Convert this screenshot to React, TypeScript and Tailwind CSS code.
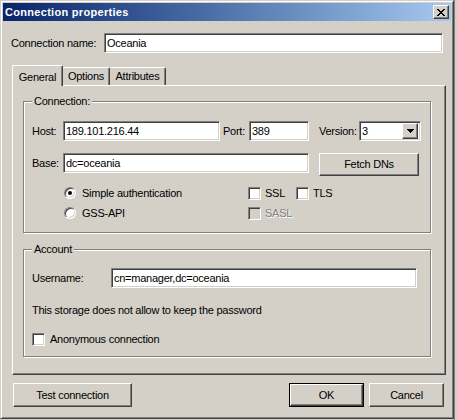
import type { ReactNode } from 'react';

const sunken =
  'border border-t-[#808080] border-l-[#808080] border-r-white border-b-white shadow-[inset_1px_1px_0_#404040,inset_-1px_-1px_0_#d4d0c8]';
const raised =
  'border border-t-white border-l-white border-r-[#404040] border-b-[#404040] shadow-[inset_-1px_-1px_0_#808080]';

function TextBox({ value, className }: { value: string; className: string }) {
  return (
    <div className={`${sunken} flex h-[20px] items-center bg-white pl-[2px] ${className}`}>
      <span>{value}</span>
    </div>
  );
}

function Button({ label, className, isDefault }: { label: string; className: string; isDefault?: boolean }) {
  if (isDefault) {
    return (
      <div className={`border border-black ${className}`}>
        <div className={`${raised} flex h-full w-full items-center justify-center`}>{label}</div>
      </div>
    );
  }
  return <div className={`${raised} flex items-center justify-center ${className}`}>{label}</div>;
}

function Checkbox({ disabled }: { disabled?: boolean }) {
  return <div className={`${sunken} h-[13px] w-[13px] shrink-0 ${disabled ? 'bg-[#d4d0c8]' : 'bg-white'}`} />;
}

function Radio({ checked }: { checked?: boolean }) {
  return (
    <div className="flex h-[12px] w-[12px] shrink-0 items-center justify-center rounded-full border border-t-[#808080] border-l-[#808080] border-r-white border-b-white bg-white shadow-[inset_1px_1px_0_#404040,inset_-1px_-1px_0_#d4d0c8]">
      {checked && <div className="h-[4px] w-[4px] rounded-full bg-black" />}
    </div>
  );
}

function Group({ title, className, children }: { title: string; className: string; children: ReactNode }) {
  return (
    <div
      className={`relative ml-[10px] w-[408px] border border-[#808080] shadow-[1px_1px_0_#fff,inset_1px_1px_0_#fff] ${className}`}
    >
      <span className="absolute -top-[8px] left-[8px] bg-[#d4d0c8] px-[2px] leading-[14px]">{title}</span>
      {children}
    </div>
  );
}

export default function App() {
  return (
    <div className="flex h-[420px] w-[457px] bg-[#d4d0c8] font-['Liberation_Sans',Arial,sans-serif] text-[11px] tracking-[-0.25px] text-black">
      <div className="h-[419px] w-[454px] shrink-0 border border-t-[#d4d0c8] border-l-[#d4d0c8] border-r-[#404040] border-b-[#404040] p-[2px] shadow-[inset_1px_1px_0_#fff,inset_-1px_-1px_0_#808080]">
        {/* title bar */}
        <div className="flex h-[18px] items-center justify-between bg-linear-to-r from-[#0a246a] to-[#a6caf0] pl-[2px] pr-[2px]">
          <span className="text-[11px] font-bold tracking-[0.3px] text-white">Connection properties</span>
          <div className={`${raised} flex h-[14px] w-[16px] items-center justify-center bg-[#d4d0c8]`}>
            <svg width="8" height="7" viewBox="0 0 8 7" shapeRendering="crispEdges">
              <path
                d="M0 0h2v1H0zM6 0h2v1H6zM1 1h2v1H1zM5 1h2v1H5zM2 2h4v1H2zM3 3h2v1H3zM2 4h4v1H2zM1 5h2v1H1zM5 5h2v1H5zM0 6h2v1H0zM6 6h2v1H6z"
                fill="#000"
              />
            </svg>
          </div>
        </div>

        {/* connection name */}
        <div className="mt-[12px] flex h-[20px] items-center">
          <span className="ml-[8px] w-[93px]">Connection name:</span>
          <TextBox value="Oceania" className="w-[339px]" />
        </div>

        {/* tabs */}
        <div className="ml-[9px] mt-[12px] flex h-[20px] items-end">
          <div className="relative z-10 -mb-[1px] flex h-[21px] w-[51px] items-start justify-center rounded-t-[2px] border-l border-t border-r border-l-white border-t-white border-r-[#404040] bg-[#d4d0c8] pt-[3px] shadow-[inset_-1px_0_0_#808080]">
            General
          </div>
          <div className="flex h-[18px] w-[47px] items-center justify-center rounded-t-[2px] border-t border-r border-t-white border-r-[#404040] shadow-[inset_-1px_0_0_#808080]">
            Options
          </div>
          <div className="flex h-[18px] w-[56px] items-center justify-center rounded-t-[2px] border-t border-r border-t-white border-r-[#404040] shadow-[inset_-1px_0_0_#808080]">
            Attributes
          </div>
        </div>

        {/* tab panel */}
        <div className="ml-[9px] flex h-[290px] w-[434px] flex-col border border-t-white border-l-white border-r-[#404040] border-b-[#404040] shadow-[inset_-1px_-1px_0_#808080]">
          <Group title="Connection:" className="mt-[15px] h-[132px]">
            <div className="mt-[19px] flex h-[20px] items-center">
              <span className="ml-[8px] w-[31px]">Host:</span>
              <TextBox value="189.101.216.44" className="w-[157px]" />
              <span className="ml-[3px] w-[26px]">Port:</span>
              <TextBox value="389" className="w-[60px]" />
              <span className="ml-[10px] w-[40px]">Version:</span>
              <div className={`${sunken} flex h-[20px] w-[62px] items-center justify-between bg-white pl-[2px] pr-[2px]`}>
                <span>3</span>
                <div className={`${raised} flex h-[16px] w-[16px] items-center justify-center bg-[#d4d0c8]`}>
                  <svg width="7" height="4" viewBox="0 0 7 4" shapeRendering="crispEdges">
                    <path d="M0 0h7v1H0zM1 1h5v1H1zM2 2h3v1H2zM3 3h1v1H3z" fill="#000" />
                  </svg>
                </div>
              </div>
            </div>

            <div className="mt-[12px] flex items-start">
              <span className="ml-[8px] flex h-[20px] w-[31px] items-center">Base:</span>
              <TextBox value="dc=oceania" className="w-[246px]" />
              <Button label="Fetch DNs" className="ml-[10px] h-[23px] w-[100px]" />
            </div>

            <div className="mt-[7px] flex">
              <div className="ml-[40px] flex w-[184px] flex-col">
                <div className="flex h-[20px] items-center gap-[6px]">
                  <Radio checked />
                  <span>Simple authentication</span>
                </div>
                <div className="flex h-[20px] items-center gap-[6px]">
                  <Radio />
                  <span>GSS-API</span>
                </div>
              </div>
              <div className="flex flex-col">
                <div className="flex h-[20px] items-center">
                  <Checkbox />
                  <span className="ml-[4px] w-[31px]">SSL</span>
                  <Checkbox />
                  <span className="ml-[4px]">TLS</span>
                </div>
                <div className="flex h-[20px] items-center">
                  <Checkbox disabled />
                  <span className="ml-[4px] text-[#808080] [text-shadow:1px_1px_0_#fff]">SASL</span>
                </div>
              </div>
            </div>
          </Group>

          <Group title="Account" className="mt-[16px] h-[108px]">
            <div className="mt-[18px] flex h-[20px] items-center">
              <span className="ml-[8px] w-[79px]">Username:</span>
              <TextBox value="cn=manager,dc=oceania" className="w-[306px]" />
            </div>
            <div className="ml-[8px] mt-[12px] flex h-[20px] items-center">
              This storage does not allow to keep the password
            </div>
            <div className="ml-[8px] mt-[9px] flex h-[20px] items-center">
              <Checkbox />
              <span className="ml-[5px]">Anonymous connection</span>
            </div>
          </Group>
        </div>

        {/* dialog buttons */}
        <div className="mt-[8px] flex">
          <Button label="Test connection" className="ml-[10px] h-[24px] w-[119px]" />
          <Button label="OK" isDefault className="ml-[157px] h-[24px] w-[75px]" />
          <Button label="Cancel" className="ml-[5px] h-[24px] w-[75px]" />
        </div>
      </div>
      <div className="h-full flex-1 border-l border-[#808080]" />
    </div>
  );
}
